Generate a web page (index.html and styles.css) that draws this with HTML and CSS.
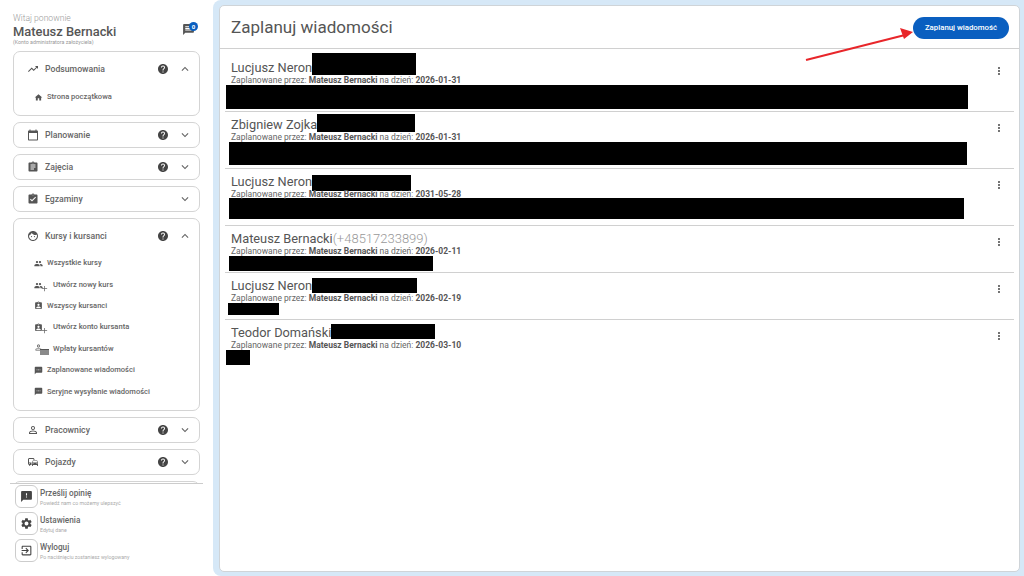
FILE: index.html
```html
<!DOCTYPE html>
<html lang="pl">
<head>
<meta charset="utf-8">
<title>Zaplanuj wiadomości</title>
<link rel="stylesheet" href="styles.css">
</head>
<body>
<svg class="defs" width="0" height="0" aria-hidden="true">
  <symbol id="i-trend" viewBox="0 0 24 24"><path d="M16 6l2.29 2.29-4.88 4.88-4-4L2 16.59 3.41 18l6-6 4 4 6.3-6.29L22 12V6z"/></symbol>
  <symbol id="i-help" viewBox="0 0 24 24"><path d="M12 2C6.48 2 2 6.48 2 12s4.48 10 10 10 10-4.48 10-10S17.52 2 12 2zm1 17h-2v-2h2v2zm2.07-7.75l-.9.92C13.45 12.9 13 13.5 13 15h-2v-.5c0-1.1.45-2.1 1.17-2.83l1.24-1.26c.37-.36.59-.86.59-1.41 0-1.1-.9-2-2-2s-2 .9-2 2H8c0-2.21 1.79-4 4-4s4 1.79 4 4c0 .88-.36 1.68-.93 2.25z"/></symbol>
  <symbol id="i-down" viewBox="0 0 24 24"><path d="M16.59 8.59L12 13.17 7.41 8.59 6 10l6 6 6-6z"/></symbol>
  <symbol id="i-up" viewBox="0 0 24 24"><path d="M12 8l-6 6 1.41 1.41L12 10.83l4.59 4.58L18 14z"/></symbol>
  <symbol id="i-home" viewBox="0 0 24 24"><path d="M10 20v-6h4v6h5v-8h3L12 3 2 12h3v8z"/></symbol>
  <symbol id="i-cal" viewBox="0 0 24 24"><path d="M20 3h-1V1h-2v2H7V1H5v2H4c-1.1 0-2 .9-2 2v16c0 1.1.9 2 2 2h16c1.1 0 2-.9 2-2V5c0-1.1-.9-2-2-2zm0 18H4V8h16v13z"/></symbol>
  <symbol id="i-assign" viewBox="0 0 24 24"><path d="M19 3h-4.18C14.4 1.84 13.3 1 12 1c-1.3 0-2.4.84-2.82 2H5c-1.1 0-2 .9-2 2v14c0 1.1.9 2 2 2h14c1.1 0 2-.9 2-2V5c0-1.1-.9-2-2-2zm-7 0c.55 0 1 .45 1 1s-.45 1-1 1-1-.45-1-1 .45-1 1-1zm2 14H7v-2h7v2zm3-4H7v-2h10v2zm0-4H7V7h10v2z"/></symbol>
  <symbol id="i-check" viewBox="0 0 24 24"><path d="M19 3h-4.18C14.4 1.84 13.3 1 12 1c-1.3 0-2.4.84-2.82 2H5c-1.1 0-2 .9-2 2v14c0 1.1.9 2 2 2h14c1.1 0 2-.9 2-2V5c0-1.1-.9-2-2-2zm-7 0c.55 0 1 .45 1 1s-.45 1-1 1-1-.45-1-1 .45-1 1-1zm-2 14l-4-4 1.41-1.41L10 14.17l6.59-6.59L18 9l-8 8z"/></symbol>
  <symbol id="i-face" viewBox="0 0 24 24"><path d="M9 11.75c-.69 0-1.25.56-1.25 1.25s.56 1.25 1.25 1.25 1.25-.56 1.25-1.25-.56-1.25-1.25-1.25zm6 0c-.69 0-1.25.56-1.25 1.25s.56 1.25 1.25 1.25 1.25-.56 1.25-1.25-.56-1.25-1.25-1.25zM12 2C6.48 2 2 6.48 2 12s4.48 10 10 10 10-4.48 10-10S17.52 2 12 2zm0 18c-4.41 0-8-3.59-8-8 0-.29.02-.58.05-.86 2.36-1.05 4.23-2.98 5.21-5.37C11.07 8.33 14.05 10 17.42 10c.78 0 1.53-.09 2.25-.26.21.71.33 1.47.33 2.26 0 4.41-3.59 8-8 8z"/></symbol>
  <symbol id="i-people" viewBox="0 0 24 24"><path d="M16 11c1.66 0 2.99-1.34 2.99-3S17.66 5 16 5c-1.66 0-3 1.34-3 3s1.34 3 3 3zm-8 0c1.66 0 2.99-1.34 2.99-3S9.66 5 8 5C6.34 5 5 6.34 5 8s1.34 3 3 3zm0 2c-2.33 0-7 1.17-7 3.5V19h14v-2.5c0-2.33-4.67-3.5-7-3.5zm8 0c-.29 0-.62.02-.97.05 1.16.84 1.97 1.97 1.97 3.45V19h6v-2.5c0-2.33-4.67-3.5-7-3.5z"/></symbol>
  <symbol id="i-ind" viewBox="0 0 24 24"><path d="M19 3h-4.18C14.4 1.84 13.3 1 12 1c-1.3 0-2.4.84-2.82 2H5c-1.1 0-2 .9-2 2v14c0 1.1.9 2 2 2h14c1.1 0 2-.9 2-2V5c0-1.1-.9-2-2-2zm-7 0c.55 0 1 .45 1 1s-.45 1-1 1-1-.45-1-1 .45-1 1-1zm0 4c1.66 0 3 1.34 3 3s-1.34 3-3 3-3-1.34-3-3 1.34-3 3-3zm6 12H6v-1.4c0-2 4-3.1 6-3.1s6 1.1 6 3.1V19z"/></symbol>
  <symbol id="i-add" viewBox="0 0 24 24"><path d="M19 13h-6v6h-2v-6H5v-2h6V5h2v6h6v2z"/></symbol>
  <symbol id="i-sms" viewBox="0 0 24 24"><path d="M20 2H4c-1.1 0-1.99.9-1.99 2L2 22l4-4h14c1.1 0 2-.9 2-2V4c0-1.1-.9-2-2-2zM9 11H7V9h2v2zm4 0h-2V9h2v2zm4 0h-2V9h2v2z"/></symbol>
  <symbol id="i-chat" viewBox="0 0 24 24"><path d="M20 2H4c-1.1 0-1.99.9-1.99 2L2 22l4-4h14c1.1 0 2-.9 2-2V4c0-1.1-.9-2-2-2zm-2 12H6v-2h12v2zm0-3H6V9h12v2zm0-3H6V6h12v2z"/></symbol>
  <symbol id="i-feedback" viewBox="0 0 24 24"><path d="M20 2H4c-1.1 0-1.99.9-1.99 2L2 22l4-4h14c1.1 0 2-.9 2-2V4c0-1.1-.9-2-2-2zm-7 12h-2v-2h2v2zm0-4h-2V6h2v4z"/></symbol>
  <symbol id="i-gear" viewBox="0 0 24 24"><path d="M19.14 12.94c.04-.3.06-.61.06-.94 0-.32-.02-.64-.07-.94l2.03-1.58c.18-.14.23-.41.12-.61l-1.92-3.32c-.12-.22-.37-.29-.59-.22l-2.39.96c-.5-.38-1.03-.7-1.62-.94l-.36-2.54c-.04-.24-.24-.41-.48-.41h-3.84c-.24 0-.43.17-.47.41l-.36 2.54c-.59.24-1.13.57-1.62.94l-2.39-.96c-.22-.08-.47 0-.59.22L2.74 8.87c-.12.21-.08.47.12.61l2.03 1.58c-.05.3-.09.63-.09.94s.02.64.07.94l-2.03 1.58c-.18.14-.23.41-.12.61l1.92 3.32c.12.22.37.29.59.22l2.39-.96c.5.38 1.03.7 1.62.94l.36 2.54c.05.24.24.41.48.41h3.84c.24 0 .44-.17.47-.41l.36-2.54c.59-.24 1.13-.56 1.62-.94l2.39.96c.22.08.47 0 .59-.22l1.92-3.32c.12-.22.07-.47-.12-.61l-2.01-1.58zM12 15.6c-1.98 0-3.6-1.62-3.6-3.6s1.62-3.6 3.6-3.6 3.6 1.62 3.6 3.6-1.62 3.6-3.6 3.6z"/></symbol>
  <symbol id="i-exit" viewBox="0 0 24 24"><path d="M10.09 15.59L11.5 17l5-5-5-5-1.41 1.41L12.67 11H3v2h9.67l-2.58 2.59zM19 3H5c-1.11 0-2 .9-2 2v4h2V5h14v14H5v-4H3v4c0 1.1.89 2 2 2h14c1.1 0 2-.9 2-2V5c0-1.1-.9-2-2-2z"/></symbol>
  <symbol id="i-more" viewBox="0 0 24 24"><path d="M12 8c1.1 0 2-.9 2-2s-.9-2-2-2-2 .9-2 2 .9 2 2 2zm0 2c-1.1 0-2 .9-2 2s.9 2 2 2 2-.9 2-2-.9-2-2-2zm0 6c-1.1 0-2 .9-2 2s.9 2 2 2 2-.9 2-2-.9-2-2-2z"/></symbol>
  <symbol id="i-person" viewBox="0 0 24 24"><path d="M12 5.9c1.16 0 2.1.94 2.1 2.1s-.94 2.1-2.1 2.1S9.9 9.16 9.9 8s.94-2.1 2.1-2.1m0 9c2.97 0 6.1 1.46 6.1 2.1v1.1H5.9V17c0-.64 3.13-2.1 6.1-2.1M12 4C9.79 4 8 5.79 8 8s1.79 4 4 4 4-1.79 4-4-1.79-4-4-4zm0 9c-2.67 0-8 1.34-8 4v3h16v-3c0-2.66-5.33-4-8-4z"/></symbol>
  <symbol id="i-commute" viewBox="0 0 24 24"><path d="M12 4H5C3.34 4 2 5.34 2 7v8c0 1.66 1.34 3 3 3l-1 1v1h1l2-2.03L9 18v-5H4V5.98L13 6v2h2V7c0-1.66-1.34-3-3-3zM5 14c.55 0 1 .45 1 1s-.45 1-1 1-1-.45-1-1 .45-1 1-1zm15.57-4.34c-.14-.4-.52-.66-.97-.66h-7.19c-.46 0-.83.26-.98.66L10 13.77l.01 5.51c0 .38.31.72.69.72h.62c.38 0 .68-.38.68-.76V18h8v1.24c0 .38.31.76.69.76h.61c.38 0 .69-.34.69-.72l.01-1.37v-4.14l-1.43-4.11zm-8.16.34h7.19l1.03 3h-9.25l1.03-3zM12 16c-.55 0-1-.45-1-1s.45-1 1-1 1 .45 1 1-.45 1-1 1zm8 0c-.55 0-1-.45-1-1s.45-1 1-1 1 .45 1 1-.45 1-1 1z"/></symbol>
</svg>

<div class="app">
  <aside class="sidebar">
    <header class="who">
      <div class="who-text">
        <div class="hello">Witaj ponownie</div>
        <div class="user">Mateusz Bernacki</div>
        <div class="role">(Konto administratora założyciela)</div>
      </div>
      <div class="msg-btn">
        <svg class="ico-msg"><use href="#i-chat"/></svg>
        <span class="badge">0</span>
      </div>
    </header>

    <nav class="nav">
      <section class="group">
        <div class="group-head group-head-open">
          <svg class="ico"><use href="#i-trend"/></svg><span class="group-name">Podsumowania</span>
          <svg class="ico-help"><use href="#i-help"/></svg><svg class="ico-chev"><use href="#i-up"/></svg>
        </div>
        <ul class="links links-one">
          <li class="link"><svg class="ico-s"><use href="#i-home"/></svg>Strona początkowa</li>
        </ul>
      </section>
      <section class="group">
        <div class="group-head">
          <svg class="ico"><use href="#i-cal"/></svg><span class="group-name">Planowanie</span>
          <svg class="ico-help"><use href="#i-help"/></svg><svg class="ico-chev"><use href="#i-down"/></svg>
        </div>
      </section>
      <section class="group">
        <div class="group-head">
          <svg class="ico"><use href="#i-assign"/></svg><span class="group-name">Zajęcia</span>
          <svg class="ico-help"><use href="#i-help"/></svg><svg class="ico-chev"><use href="#i-down"/></svg>
        </div>
      </section>
      <section class="group">
        <div class="group-head">
          <svg class="ico"><use href="#i-check"/></svg><span class="group-name">Egzaminy</span>
          <svg class="ico-chev"><use href="#i-down"/></svg>
        </div>
      </section>
      <section class="group">
        <div class="group-head group-head-open">
          <svg class="ico"><use href="#i-face"/></svg><span class="group-name">Kursy i kursanci</span>
          <svg class="ico-help"><use href="#i-help"/></svg><svg class="ico-chev"><use href="#i-up"/></svg>
        </div>
        <ul class="links">
          <li class="link"><svg class="ico-s"><use href="#i-people"/></svg>Wszystkie kursy</li>
          <li class="link">
            <span class="stack"><svg class="ico-s"><use href="#i-people"/></svg><svg class="ico-plus"><use href="#i-add"/></svg></span>Utwórz nowy kurs
          </li>
          <li class="link"><svg class="ico-s"><use href="#i-ind"/></svg>Wszyscy kursanci</li>
          <li class="link">
            <span class="stack"><svg class="ico-s"><use href="#i-ind"/></svg><svg class="ico-plus"><use href="#i-add"/></svg></span>Utwórz konto kursanta
          </li>
          <li class="link">
            <span class="stack"><svg class="ico-s ico-payer"><use href="#i-person"/></svg><span class="cash"></span></span>Wpłaty kursantów
          </li>
          <li class="link"><svg class="ico-s"><use href="#i-sms"/></svg>Zaplanowane wiadomości</li>
          <li class="link"><svg class="ico-s"><use href="#i-sms"/></svg>Seryjne wysyłanie wiadomości</li>
        </ul>
      </section>
      <section class="group">
        <div class="group-head">
          <svg class="ico"><use href="#i-person"/></svg><span class="group-name">Pracownicy</span>
          <svg class="ico-help"><use href="#i-help"/></svg><svg class="ico-chev"><use href="#i-down"/></svg>
        </div>
      </section>
      <section class="group">
        <div class="group-head">
          <svg class="ico"><use href="#i-commute"/></svg><span class="group-name">Pojazdy</span>
          <svg class="ico-help"><use href="#i-help"/></svg><svg class="ico-chev"><use href="#i-down"/></svg>
        </div>
      </section>
      <section class="group"><div class="group-head"></div></section>
    </nav>

    <footer class="foot">
      <div class="foot-item">
        <span class="foot-ico"><svg class="ico-f"><use href="#i-feedback"/></svg></span>
        <div class="foot-text"><div class="foot-title">Prześlij opinię</div><div class="foot-sub">Powiedź nam co możemy ulepszyć</div></div>
      </div>
      <div class="foot-item">
        <span class="foot-ico"><svg class="ico-f"><use href="#i-gear"/></svg></span>
        <div class="foot-text"><div class="foot-title">Ustawienia</div><div class="foot-sub">Edytuj dane</div></div>
      </div>
      <div class="foot-item">
        <span class="foot-ico"><svg class="ico-f"><use href="#i-exit"/></svg></span>
        <div class="foot-text"><div class="foot-title">Wyloguj</div><div class="foot-sub">Po naciśnięciu zostaniesz wylogowany</div></div>
      </div>
    </footer>
  </aside>

  <main class="main">
    <div class="card">
      <div class="card-head">
        <h1 class="title">Zaplanuj wiadomości</h1>
        <button class="primary">Zaplanuj wiadomość</button>
      </div>
      <div class="list">
        <article class="row">
          <div class="name">Lucjusz Neron<span class="hide h1"></span></div>
          <p class="meta">Zaplanowane przez: <b>Mateusz Bernacki</b> na dzień: <b>2026-01-31</b></p>
          <div class="msg m1"></div>
          <svg class="more"><use href="#i-more"/></svg>
        </article>
        <article class="row">
          <div class="name">Zbigniew Zojka<span class="hide h2"></span></div>
          <p class="meta">Zaplanowane przez: <b>Mateusz Bernacki</b> na dzień: <b>2026-01-31</b></p>
          <div class="msg m2"></div>
          <svg class="more"><use href="#i-more"/></svg>
        </article>
        <article class="row">
          <div class="name">Lucjusz Neron<span class="hide h3"></span></div>
          <p class="meta">Zaplanowane przez: <b>Mateusz Bernacki</b> na dzień: <b>2031-05-28</b></p>
          <div class="msg m3"></div>
          <svg class="more"><use href="#i-more"/></svg>
        </article>
        <article class="row">
          <div class="name">Mateusz Bernacki<span class="phone">(+48517233899)</span></div>
          <p class="meta">Zaplanowane przez: <b>Mateusz Bernacki</b> na dzień: <b>2026-02-11</b></p>
          <div class="msg m4"></div>
          <svg class="more"><use href="#i-more"/></svg>
        </article>
        <article class="row">
          <div class="name">Lucjusz Neron<span class="hide h5"></span></div>
          <p class="meta">Zaplanowane przez: <b>Mateusz Bernacki</b> na dzień: <b>2026-02-19</b></p>
          <div class="msg m5"></div>
          <svg class="more"><use href="#i-more"/></svg>
        </article>
        <article class="row row-last">
          <div class="name">Teodor Domański<span class="hide h6"></span></div>
          <p class="meta">Zaplanowane przez: <b>Mateusz Bernacki</b> na dzień: <b>2026-03-10</b></p>
          <div class="msg m6"></div>
          <svg class="more"><use href="#i-more"/></svg>
        </article>
      </div>
    </div>
    <svg class="arrow" width="120" height="40" viewBox="0 0 120 40">
      <line x1="1" y1="34" x2="100" y2="9" stroke="#e8262a" stroke-width="2"/>
      <polygon points="108,6 95,2 99,13" fill="#e8262a"/>
    </svg>
  </main>
</div>
</body>
</html>
```

FILE: styles.css
```css
* { box-sizing: border-box; }
html, body { margin: 0; height: 100%; }
body {
  font-family: Roboto, "Liberation Sans", sans-serif;
  color: #555;
  background: #fff;
  overflow: hidden;
}
svg { fill: currentColor; flex: none; display: block; }
.defs { position: absolute; }
ul { list-style: none; margin: 0; padding: 0; }

.app { display: flex; width: 1024px; height: 576px; }

/* sidebar */
.sidebar { width: 213px; height: 576px; display: flex; flex-direction: column; background: #fff; }
.who { height: 51px; padding: 13px 14px 0 13px; display: flex; justify-content: space-between; }
.hello { font-size: 8.6px; line-height: 11px; color: #999; font-weight: 300; }
.user { font-size: 12.9px; line-height: 15px; font-weight: 500; color: #555; }
.role { font-size: 5.3px; line-height: 7px; color: #999; }
.msg-btn { position: relative; margin-top: 9px; margin-right: 4px; width: 13px; height: 13px; }
.ico-msg { width: 13px; height: 13px; color: #555; margin-top: 1px; }
.badge {
  position: absolute; top: 0; right: -3px; width: 9px; height: 9px; border-radius: 50%;
  background: #0a5fc0; color: #fff; font-size: 6px; line-height: 9px; text-align: center; font-weight: 700;
}

.nav { height: 432px; overflow: hidden; padding: 0 13px; display: flex; flex-direction: column; gap: 6px; flex: none; }
.group { border: 1px solid #d4d4d4; border-radius: 7px; width: 187px; flex: none; }
.group-head { height: 24px; padding: 0 7px 0 13px; display: flex; align-items: center; }
.group-head-open { height: 32px; padding-top: 1px; }
.group-name { flex: 1; font-size: 8.7px; font-weight: 500; margin-left: 6px; color: #666; }
.ico { width: 12px; height: 12px; color: #555; }
.ico-help { width: 12px; height: 12px; color: #444; margin-right: 9px; }
.ico-chev { width: 14px; height: 14px; color: #666; }

.links { padding: 1px 0 0 20px; height: 159px; display: flex; flex-direction: column; }
.links-one { height: 31px; padding-top: 2px; }
.link { height: 21.4px; flex: none; display: flex; align-items: center; font-size: 7.55px; font-weight: 500; color: #666; }
.ico-s { width: 9px; height: 9px; color: #555; margin-right: 4px; margin-top: 1px; }
.stack { position: relative; width: 19px; height: 21px; flex: none; padding-top: 6px; }
.ico-plus { position: absolute; left: 6px; top: 10px; width: 9px; height: 9px; }
.ico-payer { margin-top: -1px; }
.cash { position: absolute; left: 6px; top: 11px; width: 9px; height: 6px; background: #8a8a8a; border-top: 1px solid #555; }

.foot { flex: 1; margin: 0 10px; border-top: 1px solid #ccc; padding: 1px 0 0 5px; display: flex; flex-direction: column; gap: 4px; background: #fff; }
.foot-item { display: flex; height: 23px; }
.foot-ico {
  width: 23px; height: 23px; border: 1px solid #ccc; border-radius: 6px;
  display: flex; align-items: center; justify-content: center; margin-right: 2px;
}
.ico-f { width: 13px; height: 13px; color: #444; }
.foot-text { margin-top: 2.5px; }
.foot-title { font-size: 8.2px; line-height: 11px; font-weight: 500; color: #666; }
.foot-sub { font-size: 5.2px; line-height: 8px; color: #aaa; }

/* main */
.main {
  position: relative; flex: 1; background: #d6e8f7;
  border-radius: 8px 0 0 8px; padding: 5px 4px 4px 6px;
}
.card { height: 567px; background: #fff; border: 1px solid #cfd4d8; border-radius: 5px; }
.card-head {
  height: 43px; display: flex; align-items: center; justify-content: space-between;
  padding: 0 10px 0 11px; border-bottom: 1px solid #d0d0d0;
}
.title { margin: 0; font-size: 17.05px; font-weight: 400; color: #555; }
.primary {
  width: 96px; height: 22px; border: 0; border-radius: 11px; background: #0a5fc0; color: #fff;
  font: 500 7.8px Roboto, "Liberation Sans", sans-serif; padding: 0; margin-top: 1px;
}
.list { padding: 6px 5px 0; }
.row { position: relative; padding: 5px 6px 0; border-bottom: 1px solid #d0d0d0; }
.row-last { border-bottom: 0; }
.name { display: flex; height: 16px; font-size: 12.8px; line-height: 16px; font-weight: 400; color: #555; }
.phone { color: #999; font-weight: 300; font-size: 13px; }
.hide { display: block; width: 104px; background: #000; }
.h1 { height: 22px; margin-top: -7px; }
.h2 { height: 18px; margin-top: -3px; width: 98px; }
.h3 { height: 16px; margin-top: 1px; width: 99px; }
.h5 { height: 15px; width: 105px; }
.h6 { height: 15px; margin-top: -1px; }
.meta { margin: 0; height: 9px; font-size: 8.5px; line-height: 9px; color: #666; white-space: nowrap; }
.meta b { font-weight: 700; color: #555; }
.msg { background: #000; }
.m1 { width: 742px; height: 24px; margin: 0 0 2px -5px; }
.m2 { width: 738px; height: 23px; margin: 0 0 3px -2px; }
.m3 { width: 735px; height: 21px; margin: -1px 0 6px -2px; }
.m4 { width: 204px; height: 15px; margin: 0 0 1px -2px; }
.m5 { width: 51px; height: 12px; margin: 0 0 4px -3px; }
.m6 { width: 24px; height: 15px; margin-left: -5px; }
.more { position: absolute; right: 9px; top: 10px; width: 12px; height: 12px; color: #555; }

.arrow { position: absolute; left: 592px; top: 26px; pointer-events: none; }
```
